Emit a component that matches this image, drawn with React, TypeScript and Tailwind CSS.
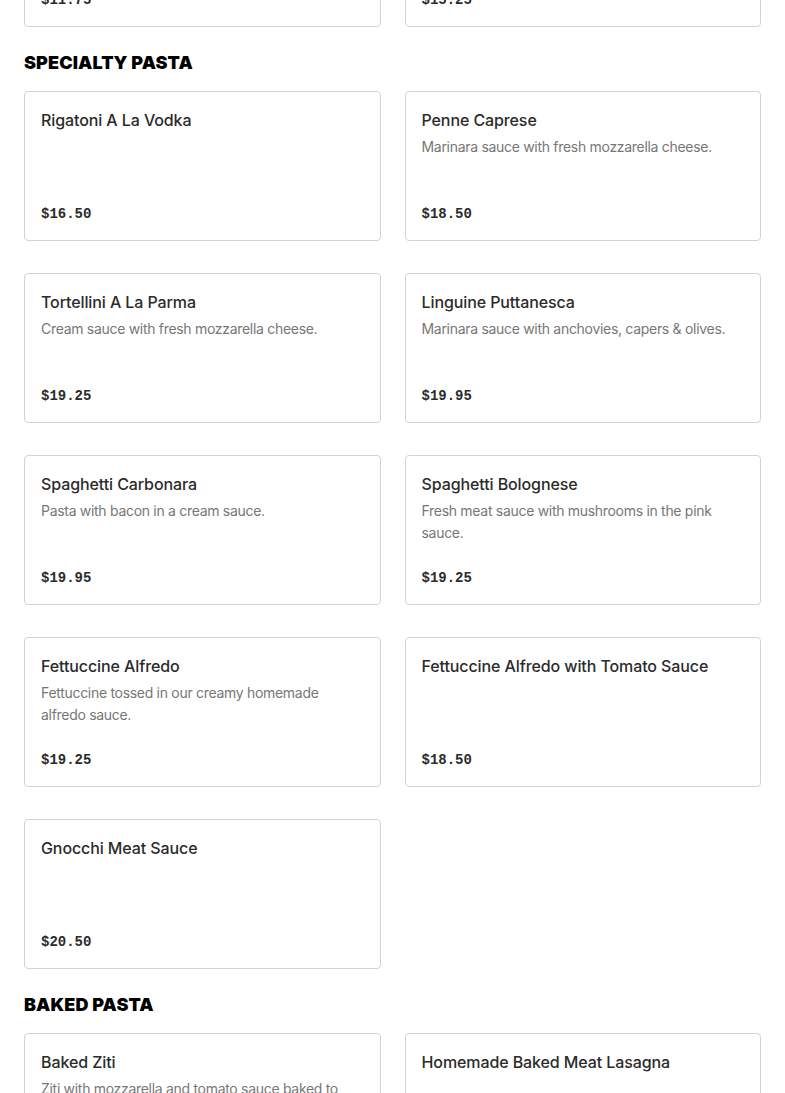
import React from "react"

type Item = { name: string; description?: string; price: string }

const sections: { title: string; items: Item[] }[] = [
  {
    title: "PASTA",
    items: [
      { name: "Spaghetti Marinara", description: "Classic marinara sauce.", price: "$11.75" },
      { name: "Baked Ravioli", description: "Cheese ravioli with marinara sauce.", price: "$15.25" },
    ],
  },
  {
    title: "SPECIALTY PASTA",
    items: [
      { name: "Rigatoni A La Vodka", price: "$16.50" },
      { name: "Penne Caprese", description: "Marinara sauce with fresh mozzarella cheese.", price: "$18.50" },
      { name: "Tortellini A La Parma", description: "Cream sauce with fresh mozzarella cheese.", price: "$19.25" },
      { name: "Linguine Puttanesca", description: "Marinara sauce with anchovies, capers & olives.", price: "$19.95" },
      { name: "Spaghetti Carbonara", description: "Pasta with bacon in a cream sauce.", price: "$19.95" },
      { name: "Spaghetti Bolognese", description: "Fresh meat sauce with mushrooms in the pink sauce.", price: "$19.25" },
      { name: "Fettuccine Alfredo", description: "Fettuccine tossed in our creamy homemade alfredo sauce.", price: "$19.25" },
      { name: "Fettuccine Alfredo with Tomato Sauce", price: "$18.50" },
      { name: "Gnocchi Meat Sauce", price: "$20.50" },
    ],
  },
  {
    title: "BAKED PASTA",
    items: [
      { name: "Baked Ziti", description: "Ziti with mozzarella and tomato sauce baked to perfection.", price: "$17.95" },
      { name: "Homemade Baked Meat Lasagna", price: "$19.95" },
      { name: "Baked Stuffed Shells", description: "Ricotta stuffed shells baked with mozzarella.", price: "$18.25" },
      { name: "Eggplant Rollatini", description: "Rolled eggplant with ricotta and mozzarella.", price: "$18.95" },
    ],
  },
]

function MenuCard({ item }: { item: Item }) {
  return (
    <div className="flex h-[150px] flex-col rounded-[4px] border border-[#d3d3d3] bg-white px-4 pt-4 pb-[15px]">
      <h3 className="text-[16px] leading-6 font-medium tracking-[-0.1px] text-[#2b2b2b]">{item.name}</h3>
      {item.description && (
        <p className="mt-1 text-[14px] leading-[22px] tracking-[-0.3px] text-[#777777]">{item.description}</p>
      )}
      <div className="mt-auto font-['Liberation_Mono',monospace] text-[14px] leading-[22px] font-bold text-[#2b2b2b]">
        {item.price}
      </div>
    </div>
  )
}

export default function App() {
  return (
    <div className="min-h-screen overflow-hidden bg-white font-['Inter',sans-serif]">
      {/* page is scrolled: first section is partly above the fold */}
      <main className="-mt-[187px] px-6">
        {sections.map((section) => (
          <section key={section.title}>
            <h2 className="mt-6 mb-4 text-[18px] leading-6 font-black tracking-[0.1px] text-black">
              {section.title}
            </h2>
            <div className="grid grid-cols-2 gap-x-6 gap-y-8">
              {section.items.map((item) => (
                <MenuCard key={item.name} item={item} />
              ))}
            </div>
          </section>
        ))}
      </main>
    </div>
  )
}
